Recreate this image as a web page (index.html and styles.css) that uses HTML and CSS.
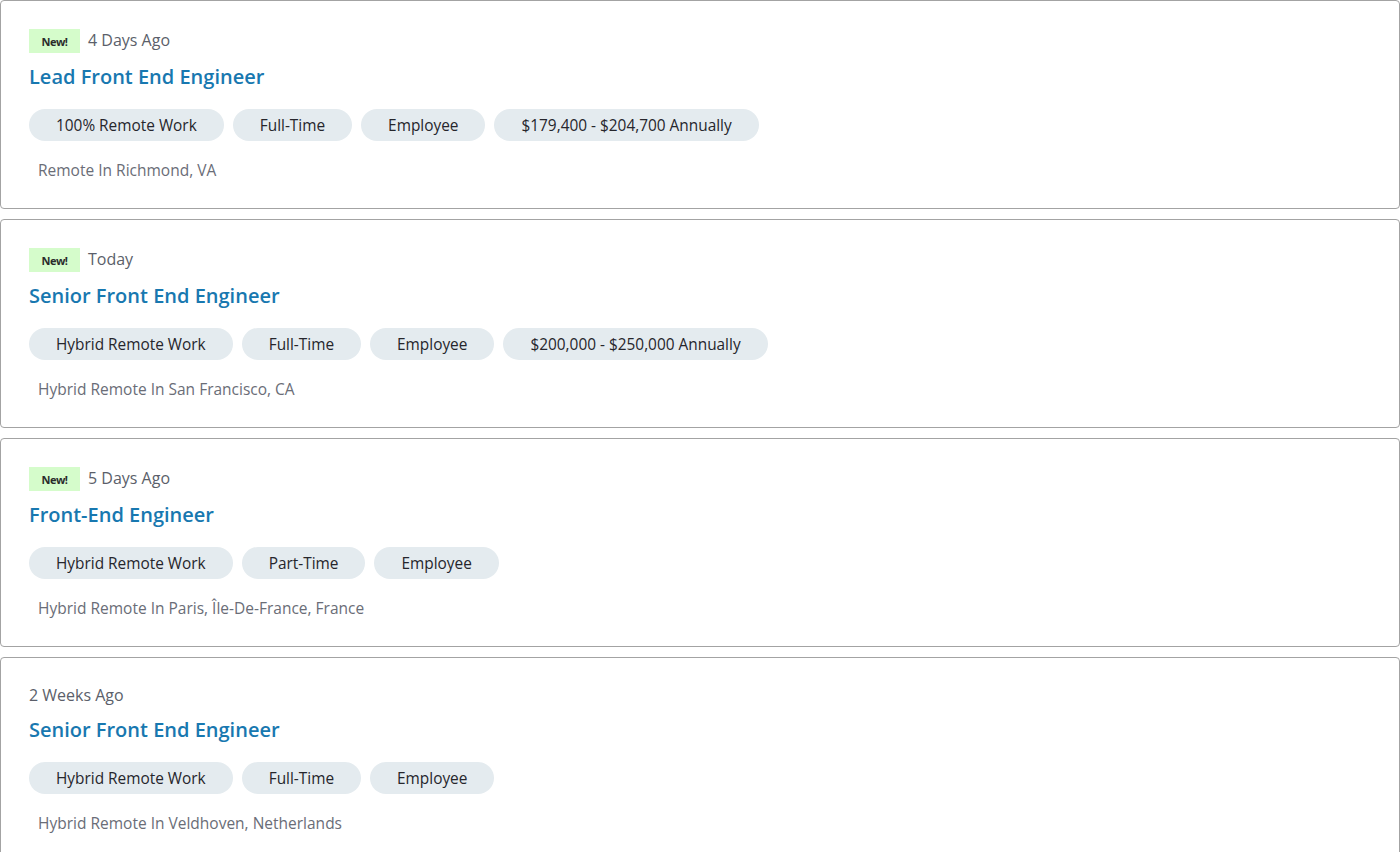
FILE: index.html
```html
<!DOCTYPE html>
<html>
<head>
<meta charset="utf-8">
<link rel="stylesheet" href="styles.css">
</head>
<body>
<div class="list">
  <div class="card">
    <div class="meta"><span class="badge">New!</span><span class="date">4 Days Ago</span></div>
    <div class="title">Lead Front End Engineer</div>
    <div class="tags"><span class="tag">100% Remote Work</span><span class="tag">Full-Time</span><span class="tag">Employee</span><span class="tag">$179,400 - $204,700 Annually</span></div>
    <div class="loc">Remote In Richmond, VA</div>
  </div>
  <div class="card">
    <div class="meta"><span class="badge">New!</span><span class="date">Today</span></div>
    <div class="title">Senior Front End Engineer</div>
    <div class="tags"><span class="tag">Hybrid Remote Work</span><span class="tag">Full-Time</span><span class="tag">Employee</span><span class="tag">$200,000 - $250,000 Annually</span></div>
    <div class="loc">Hybrid Remote In San Francisco, CA</div>
  </div>
  <div class="card">
    <div class="meta"><span class="badge">New!</span><span class="date">5 Days Ago</span></div>
    <div class="title">Front-End Engineer</div>
    <div class="tags"><span class="tag">Hybrid Remote Work</span><span class="tag">Part-Time</span><span class="tag">Employee</span></div>
    <div class="loc">Hybrid Remote In Paris, Île-De-France, France</div>
  </div>
  <div class="card">
    <div class="meta meta-plain"><span class="date">2 Weeks Ago</span></div>
    <div class="title">Senior Front End Engineer</div>
    <div class="tags"><span class="tag">Hybrid Remote Work</span><span class="tag">Full-Time</span><span class="tag">Employee</span></div>
    <div class="loc">Hybrid Remote In Veldhoven, Netherlands</div>
  </div>
</div>
</body>
</html>
```

FILE: styles.css
```css
html, body {
  margin: 0;
  padding: 0;
  background: #ffffff;
  font-family: "Open Sans", "Noto Sans", sans-serif;
}
.list {
  display: flex;
  flex-direction: column;
  gap: 10px;
}
.card {
  border: 1px solid #a3a3a3;
  border-radius: 4px;
  padding: 28px 28px 28px 28px;
  background: #fff;
}
.meta {
  display: flex;
  align-items: center;
  height: 24px;
}
.meta-plain {
  height: 20px;
}
.badge {
  background: #d5fccb;
  color: #2b2b2b;
  font-size: 11px;
  font-weight: 700;
  letter-spacing: -0.5px;
  width: 51px;
  height: 24px;
  display: flex;
  align-items: center;
  justify-content: center;
  margin-right: 8px;
}
.date {
  font-size: 16px;
  line-height: 20px;
  margin-top: -2px;
  color: #5b5f6a;
}
.title {
  margin-top: 10px;
  font-size: 20px;
  line-height: 28px;
  font-weight: 600;
  color: #1878b0;
}
.tags {
  margin-top: 18px;
  display: flex;
  gap: 9px;
}
.tag {
  height: 32px;
  display: flex;
  align-items: center;
  padding: 0 27px;
  border-radius: 16px;
  background: #e4ebef;
  color: #26262c;
  font-size: 15.4px;
}
.loc {
  margin-top: 19px;
  padding-left: 9px;
  font-size: 15.5px;
  line-height: 20px;
  color: #6a6d77;
}
```
